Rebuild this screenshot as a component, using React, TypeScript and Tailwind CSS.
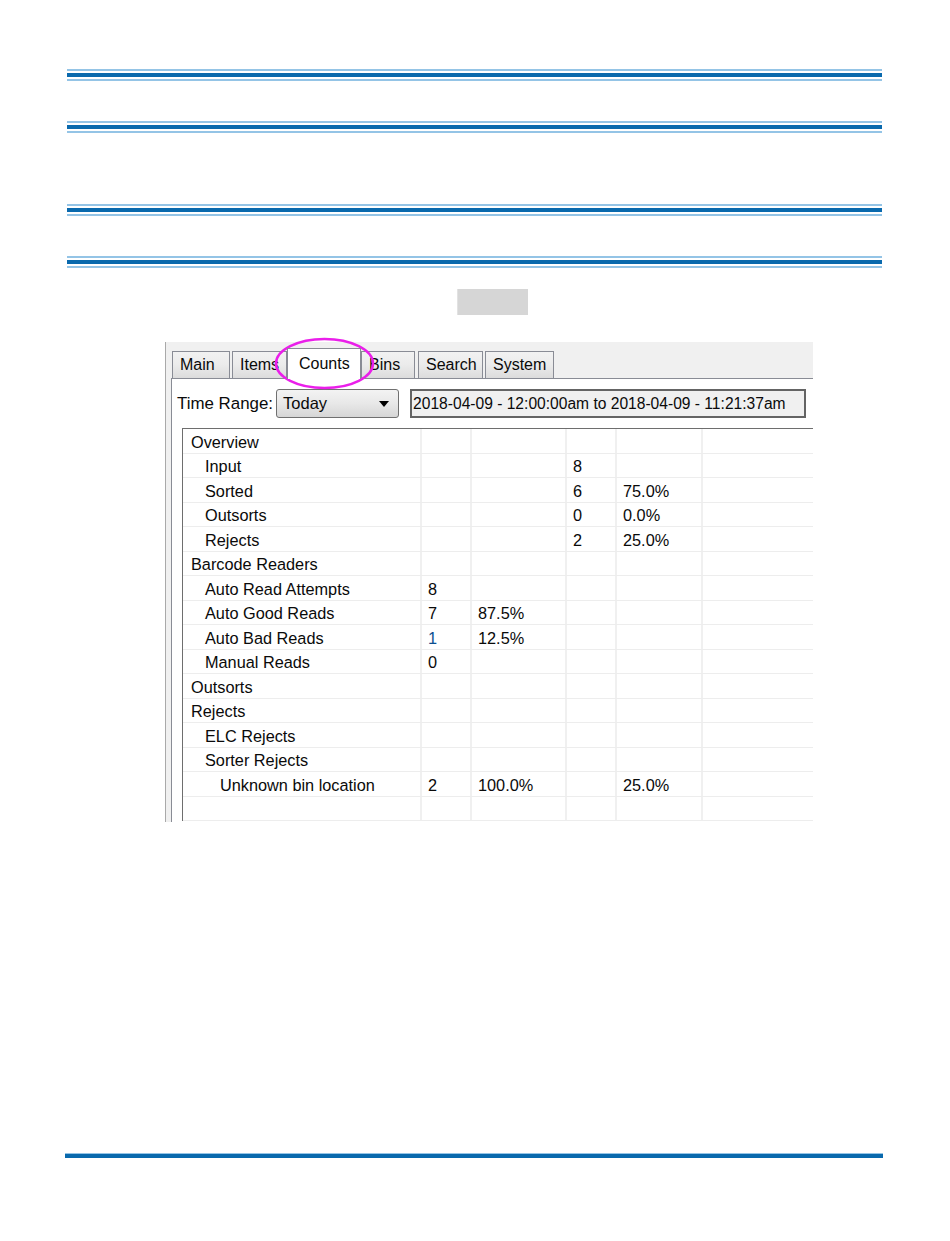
import React from 'react';

const font = { fontFamily: '"Liberation Sans", Arial, sans-serif' };

const Rule = () => (
  <div className="flex flex-col gap-[2px]">
    <div className="h-[2px] bg-[#94c4e6]" />
    <div className="h-[4px] bg-[#0969ad]" />
    <div className="h-[2px] bg-[#94c4e6]" />
  </div>
);

type Row = { label: string; level: number; c: (string | null)[]; blue?: boolean };

const rows: Row[] = [
  { label: 'Overview', level: 0, c: [null, null, null, null] },
  { label: 'Input', level: 1, c: [null, null, '8', null] },
  { label: 'Sorted', level: 1, c: [null, null, '6', '75.0%'] },
  { label: 'Outsorts', level: 1, c: [null, null, '0', '0.0%'] },
  { label: 'Rejects', level: 1, c: [null, null, '2', '25.0%'] },
  { label: 'Barcode Readers', level: 0, c: [null, null, null, null] },
  { label: 'Auto Read Attempts', level: 1, c: ['8', null, null, null] },
  { label: 'Auto Good Reads', level: 1, c: ['7', '87.5%', null, null] },
  { label: 'Auto Bad Reads', level: 1, c: ['1', '12.5%', null, null], blue: true },
  { label: 'Manual Reads', level: 1, c: ['0', null, null, null] },
  { label: 'Outsorts', level: 0, c: [null, null, null, null] },
  { label: 'Rejects', level: 0, c: [null, null, null, null] },
  { label: 'ELC Rejects', level: 1, c: [null, null, null, null] },
  { label: 'Sorter Rejects', level: 1, c: [null, null, null, null] },
  { label: 'Unknown bin location', level: 2, c: ['2', '100.0%', null, '25.0%'] },
  { label: '', level: 0, c: [null, null, null, null] },
];

const indent = ['pl-[8px]', 'pl-[22px]', 'pl-[37px]'];
const colW = ['w-[50px]', 'w-[95px]', 'w-[50px]', 'w-[86px]'];

const Tab = ({ label, w, selected }: { label: string; w: string; selected?: boolean }) =>
  selected ? (
    <div className={`${w} relative z-10 -mb-px h-[31px] border border-b-0 border-[#898c95] bg-white pl-[11px] flex items-center`}>
      {label}
    </div>
  ) : (
    <div className={`${w} h-[27px] border border-b-0 border-[#898c95] bg-linear-to-b from-[#f2f2f2] via-[#ebebeb] to-[#dcdcdc] pl-[7px] flex items-center`}>
      {label}
    </div>
  );

export default function App() {
  return (
    <div className="w-[950px] h-[1241px] bg-white text-[#0a0a0a]" style={font}>
      <div className="ml-[67px] w-[815px] pt-[69px]">
        <Rule />
        <div className="mt-[40px]"><Rule /></div>
        <div className="mt-[71px]"><Rule /></div>
        <div className="mt-[40px]"><Rule /></div>
        <div className="mt-[21px] ml-[390px] w-[71px] h-[26px] bg-[#d6d6d6] border-l border-[#e2e2e2]" />

        <div className="relative mt-[27px] ml-[98px] w-[648px] h-[480px]">
          <div className="w-full h-full overflow-hidden border-l border-[#a9a9a9] bg-[#f0f0f0] text-[16px]">
            {/* tab strip */}
            <div className="h-[36px] flex items-end pl-[6px]">
              <Tab label="Main" w="w-[58px]" />
              <div className="w-[2px]" />
              <Tab label="Items" w="w-[55px]" />
              <Tab label="Counts" w="w-[74px]" selected />
              <Tab label="Bins" w="w-[54px]" />
              <div className="w-[3px]" />
              <Tab label="Search" w="w-[65px]" />
              <div className="w-[2px]" />
              <Tab label="System" w="w-[69px]" />
            </div>
            {/* tab page */}
            <div className="ml-[5px] w-[700px] h-[460px] border-t border-l border-[#898c95] bg-white">
              <div className="flex items-center pt-[10px] pl-[5px]">
                <span className="text-[16.9px]">Time Range:</span>
                <div className="ml-[3px] w-[123px] h-[29px] rounded-[3px] border border-[#707070] bg-linear-to-b from-[#f3f3f3] via-[#e8e8e8] to-[#d6d6d6] flex items-center justify-between pl-[6px] pr-[9px] text-[16.5px]">
                  <span>Today</span>
                  <svg width="10" height="6" viewBox="0 0 10 6"><path d="M0 0h10L5 6z" fill="#000" /></svg>
                </div>
                <div className="ml-[11px] w-[396px] h-[29px] border-2 border-[#646464] bg-[#f0f0f0] flex items-center pl-[1px] text-[15.6px] whitespace-nowrap">
                  2018-04-09 - 12:00:00am to 2018-04-09 - 11:21:37am
                </div>
              </div>
              {/* grid */}
              <div className="mt-[10px] ml-[10px] w-[680px] border-t border-l border-[#6e6e6e] text-[16.3px]">
                {rows.map((r, i) => (
                  <div key={i} className="flex h-[24.5px] border-b-[1.5px] border-[#ededed]">
                    <div className={`w-[239px] shrink-0 border-r-2 border-[#f0f0f0] flex items-center pt-[2px] whitespace-nowrap ${indent[r.level]}`}>
                      {r.label}
                    </div>
                    {r.c.map((v, j) => (
                      <div
                        key={j}
                        className={`${colW[j]} shrink-0 border-r-2 border-[#f0f0f0] flex items-center pt-[2px] pl-[6px] ${r.blue && j === 0 ? 'text-[#0d4f8f]' : ''}`}
                      >
                        {v}
                      </div>
                    ))}
                    <div className="flex-1" />
                  </div>
                ))}
              </div>
            </div>
          </div>
          <svg className="absolute left-[109px] top-[-5px]" width="101" height="53" viewBox="0 0 101 53">
            <ellipse cx="50.5" cy="26.5" rx="48.5" ry="24.5" fill="none" stroke="#ea1fea" strokeWidth="2.5" />
          </svg>
        </div>

        <div className="mt-[331px] -ml-[2px] w-[818px]">
          <div className="h-[1px] bg-[#94c4e6]" />
          <div className="h-[4px] bg-[#0969ad]" />
        </div>
      </div>
    </div>
  );
}
